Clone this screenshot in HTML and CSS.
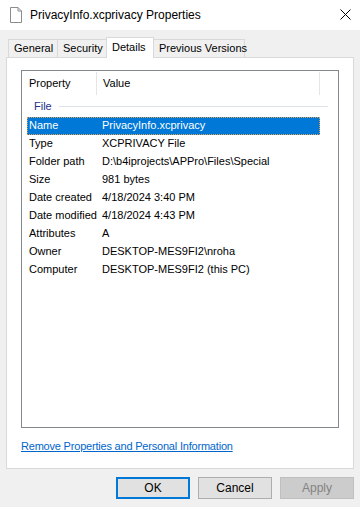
FILE: index.html
```html
<!DOCTYPE html>
<html>
<head>
<meta charset="utf-8">
<link rel="stylesheet" href="styles.css">
</head>
<body>
<div class="window">
  <div class="titlebar">
    <svg class="ficon" width="14" height="16" viewBox="0 0 14 16">
      <path d="M1.5 0.5 H9 L12.5 4 V15.5 H1.5 Z" fill="#fff" stroke="#8c8c8c"/>
      <path d="M9 0.5 V4 H12.5" fill="none" stroke="#8c8c8c"/>
    </svg>
    <span class="title">PrivacyInfo.xcprivacy Properties</span>
    <svg class="close" width="11" height="11" viewBox="0 0 11 11">
      <path d="M0.5 0.5 L10.5 10.5 M10.5 0.5 L0.5 10.5" stroke="#000" stroke-width="1"/>
    </svg>
  </div>
  <div class="client">
    <div class="tabs">
      <div class="tab t-general">General</div>
      <div class="tab t-security">Security</div>
      <div class="tab sel t-details">Details</div>
      <div class="tab t-prev">Previous Versions</div>
    </div>
    <div class="panel">
      <div class="list">
        <div class="hdr">
          <div class="hc hc1">Property</div>
          <div class="hc hc2">Value</div>
        </div>
        <div class="group"><span class="gname">File</span><span class="gline"></span></div>
        <div class="row selrow"><span class="c1">Name</span><span class="c2">PrivacyInfo.xcprivacy</span></div>
        <div class="row"><span class="c1">Type</span><span class="c2">XCPRIVACY File</span></div>
        <div class="row"><span class="c1">Folder path</span><span class="c2">D:\b4iprojects\APPro\Files\Special</span></div>
        <div class="row"><span class="c1">Size</span><span class="c2">981 bytes</span></div>
        <div class="row"><span class="c1">Date created</span><span class="c2">4/18/2024 3:40 PM</span></div>
        <div class="row"><span class="c1">Date modified</span><span class="c2">4/18/2024 4:43 PM</span></div>
        <div class="row"><span class="c1">Attributes</span><span class="c2">A</span></div>
        <div class="row"><span class="c1">Owner</span><span class="c2">DESKTOP-MES9FI2\nroha</span></div>
        <div class="row"><span class="c1">Computer</span><span class="c2">DESKTOP-MES9FI2 (this PC)</span></div>
      </div>
      <a class="link" href="#">Remove Properties and Personal Information</a>
    </div>
    <div class="buttons">
      <div class="btn ok">OK</div>
      <div class="btn">Cancel</div>
      <div class="btn dis">Apply</div>
    </div>
  </div>
</div>
</body>
</html>
```
FILE: styles.css
```css
* { box-sizing: border-box; }
html, body { margin: 0; padding: 0; }
body {
  width: 360px;
  height: 507px;
  overflow: hidden;
  font-family: "Liberation Sans", Arial, sans-serif;
  font-size: 11px;
  color: #000;
  background: #f0f0f0;
}
.window { width: 360px; height: 507px; display: flex; flex-direction: column; }
.titlebar {
  height: 30px;
  background: #fff;
  display: flex;
  align-items: center;
  padding-left: 9px;
  flex: none;
}
.ficon { flex: none; margin-top: -1px; }
.title { font-size: 12px; margin-left: 7px; flex: 1; white-space: nowrap; }
.close { margin-right: 9px; margin-top: -2px; }
.client { flex: 1; background: #f0f0f0; padding: 0 6px; }
.tabs { height: 27px; display: flex; align-items: flex-end; padding-left: 2px; position: relative; z-index: 1; }
.tab {
  height: 18px;
  border: 1px solid #d9d9d9;
  border-bottom: none;
  background: #f0f0f0;
  padding: 0 0 0 5px;
  line-height: 17px;
  margin-right: -1px;
  white-space: nowrap;
  flex: none;
}
.t-general { width: 50px; }
.t-security { width: 50px; }
.t-details {
  width: 48px;
  height: 21px;
  background: #fff;
  margin-bottom: -1px;
  line-height: 18px;
}
.t-prev { width: 92px; }
.panel {
  background: #fff;
  border: 1px solid #d9d9d9;
  height: 412px;
  padding: 12px 13px 0 14px;
}
.list {
  border: 1px solid #828790;
  height: 358px;
  width: 318px;
  padding: 0 5px;
}
.hdr { display: flex; height: 25px; }
.hc { padding-left: 2px; white-space: nowrap; }
.hc1 { width: 70px; border-right: 1px solid #e5e5e5; margin: 1px 0; line-height: 23px; }
.hc2 { width: 223px; padding-left: 6px; border-right: 1px solid #e5e5e5; margin: 1px 0; line-height: 23px; }
.group { display: flex; align-items: center; height: 18px; margin-top: 1px; }
.gname { color: #1e3287; padding-left: 7px; }
.gline { flex: 1; height: 1px; background: #dde4e9; margin-left: 7px; margin-right: 5px; }
.row { display: flex; height: 18px; line-height: 17px; width: 293px; }
.row .c1 { width: 75px; padding-left: 2px; flex: none; white-space: nowrap; }
.row .c2 { flex: 1; white-space: nowrap; }
.selrow {
  background: #0078d7;
  color: #fff;
  outline: 1px dotted #e0a050;
  outline-offset: -1px;
  margin-top: 2px;
}
.link {
  display: block;
  margin-top: 11px;
  color: #0066cc;
  text-decoration: underline;
  line-height: 15px;
  letter-spacing: -0.2px;
}
.buttons { display: flex; justify-content: flex-end; gap: 8px; margin-top: 8px; }
.btn {
  width: 74px;
  height: 22px;
  border: 1px solid #adadad;
  background: #e1e1e1;
  text-align: center;
  line-height: 20px;
  font-size: 12px;
}
.btn.ok { border: 2px solid #0078d7; line-height: 18px; }
.btn.dis { color: #838383; background: #cccccc; border-color: #bfbfbf; }
```
